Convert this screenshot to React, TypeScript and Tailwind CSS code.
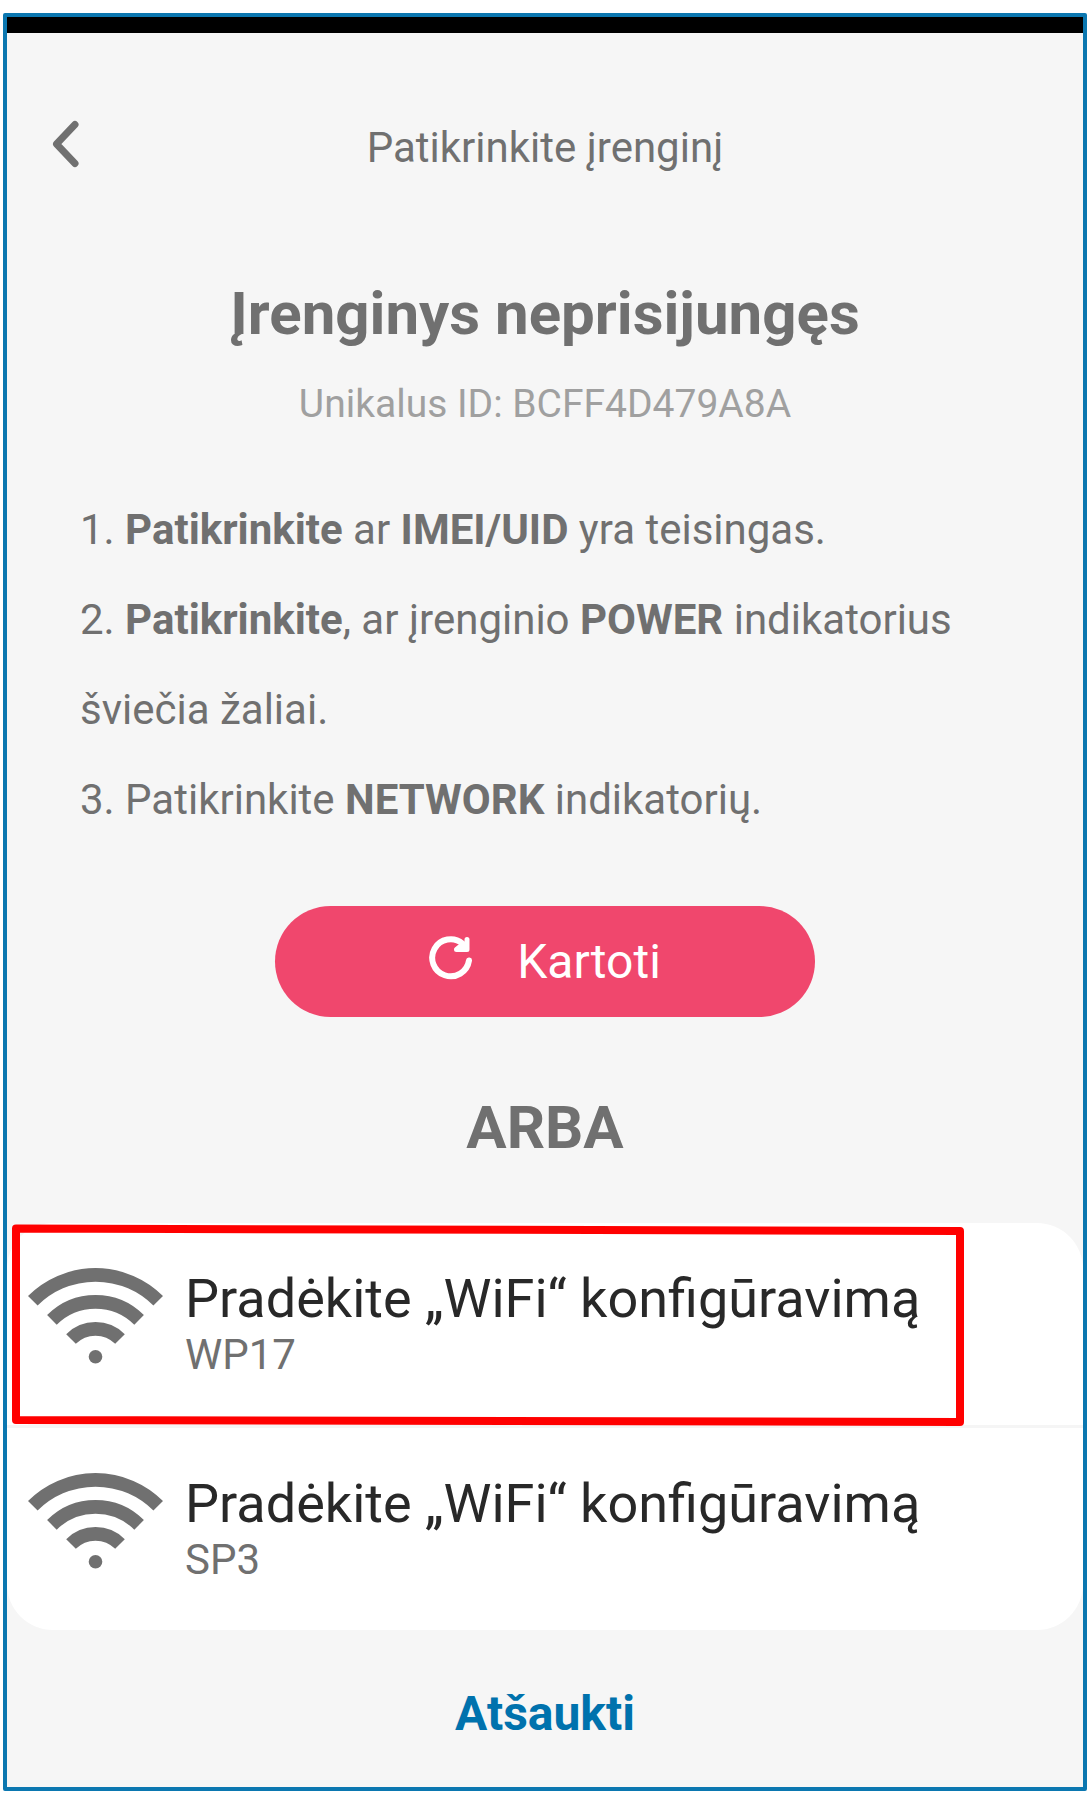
const networks = [
  { model: 'WP17', highlighted: true },
  { model: 'SP3', highlighted: false },
];

function ChevronLeft() {
  return (
    <svg width="28" height="48" viewBox="0 0 28 48" fill="none" aria-hidden="true">
      <path d="M23 4.5 4.5 24 23 43.5" stroke="#707070" strokeWidth="7" strokeLinecap="round" strokeLinejoin="round" />
    </svg>
  );
}

function RetryIcon() {
  return (
    <svg width="44" height="44" viewBox="0 0 44 44" fill="none" aria-hidden="true">
      <path d="M40 24.5A18.5 18.5 0 1 1 33.5 7.5" stroke="white" strokeWidth="6" strokeLinecap="round" />
      <path d="M38 3.5V13.5H27.5L33 9" stroke="white" strokeWidth="5" strokeLinecap="round" strokeLinejoin="round" />
      <path d="M38 5V13.5H29Z" fill="white" />
    </svg>
  );
}

function WifiIcon() {
  return (
    <svg className="shrink-0" width="135" height="96" viewBox="0 0 135 96" fill="none" aria-hidden="true">
      <g stroke="#707070" strokeWidth="13.6">
        <path d="M4.8 32.8A88.7 88.7 0 0 1 130.2 32.8" />
        <path d="M23.9 51.9A61.7 61.7 0 0 1 111.1 51.9" />
        <path d="M43 71A34.7 34.7 0 0 1 92 71" />
      </g>
      <circle cx="67.5" cy="88.7" r="6.8" fill="#707070" />
    </svg>
  );
}

function Highlight() {
  return (
    <svg
      className="pointer-events-none absolute left-[5px] top-0 h-[205px] w-[952px] max-w-full"
      viewBox="0 0 952 205"
      preserveAspectRatio="none"
      fill="none"
      aria-hidden="true"
    >
      <path d="M4 5.5 948 8V199L4 197Z" stroke="#ff0000" strokeWidth="8" strokeLinejoin="round" />
    </svg>
  );
}

export default function App() {
  return (
    <div className="bg-white pt-[13px] pr-[5px] pb-[7px] pl-[3px] font-[Roboto,sans-serif] text-[#707070]">
      <div className="flex flex-col rounded-[2px] border-4 border-[#0b77b0] bg-[#f6f6f6]">
        <div className="h-4 bg-black" />

        <header className="mt-[87px] grid grid-cols-[80px_1fr_80px] items-center">
          <button type="button" aria-label="Atgal" className="flex h-[50px] items-center pb-2 pl-[45px]">
            <ChevronLeft />
          </button>
          <h1 className="text-center text-[42px] leading-[56px]">Patikrinkite įrenginį</h1>
        </header>

        <main className="flex flex-col">
          <h2 className="mt-[102px] text-center text-[60px] leading-[72px] font-bold">Įrenginys neprisijungęs</h2>
          <p className="mt-[30px] text-center text-[39px] leading-[48px] text-[#a0a0a0]">Unikalus ID: BCFF4D479A8A</p>

          <div className="mt-[57px] px-[73px] text-[42px] leading-[90px]">
            <p>1. <b>Patikrinkite</b> ar <b>IMEI/UID</b> yra teisingas.</p>
            <p>2. <b>Patikrinkite</b>, ar įrenginio <b>POWER</b> indikatorius šviečia žaliai.</p>
            <p>3. Patikrinkite <b>NETWORK</b> indikatorių.</p>
          </div>

          <button
            type="button"
            className="mt-[61px] flex h-[111px] w-[540px] max-w-full items-center justify-center gap-11 self-center rounded-full bg-[#f0476d] text-[48px] leading-[56px] text-white"
          >
            <span className="pb-2"><RetryIcon /></span>
            Kartoti
          </button>

          <p className="mt-[75px] text-center text-[60px] leading-[72px] font-bold">ARBA</p>

          <ul className="mt-[59px] divide-y-[3px] divide-[#f5f5f5] rounded-[46px] bg-white">
            {networks.map(({ model, highlighted }) => (
              <li key={model} className="relative">
                <button type="button" className="flex h-[202px] w-full items-center gap-[22px] pl-[21px] text-left">
                  <span className="pb-4"><WifiIcon /></span>
                  <span className="flex flex-col pb-0.5">
                    <span className="text-[54px] leading-[64px] text-[#282828]">Pradėkite „WiFi“ konfigūravimą</span>
                    <span className="text-[42px] leading-[48px]">{model}</span>
                  </span>
                </button>
                {highlighted && <Highlight />}
              </li>
            ))}
          </ul>

          <button type="button" className="mt-[56px] mb-[45px] self-center text-[48px] leading-[56px] font-bold text-[#0072ad]">
            Atšaukti
          </button>
        </main>
      </div>
    </div>
  );
}
